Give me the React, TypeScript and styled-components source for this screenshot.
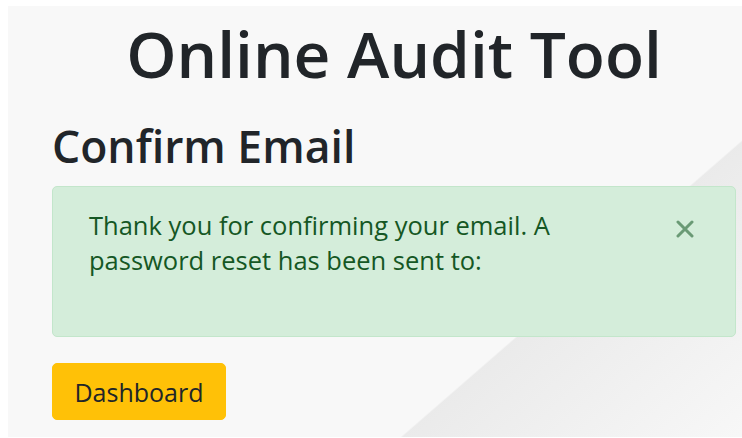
import React from 'react';
import styled, { createGlobalStyle } from 'styled-components';

const GlobalStyle = createGlobalStyle`
  html, body {
    margin: 0;
    padding: 0;
    background: #ffffff;
  }
  body {
    font-family: "Open Sans", "Noto Sans", sans-serif;
    color: #212529;
  }
`;

const Page = styled.div`
  margin: 6px 0 1px 8px;
  height: 431px;
  box-sizing: border-box;
  overflow: hidden;
  background:
    linear-gradient(139deg, rgba(255, 255, 255, 0) 72.2%, rgba(233, 233, 233, 0.9) 72.4%, rgba(246, 246, 246, 0.4) 100%),
    #f8f8f8;
`;

const Title = styled.h1`
  margin: 0;
  padding: 9px 0 0 38px;
  text-align: center;
  font-size: 64px;
  font-weight: 600;
  line-height: 78px;
  color: #212529;
`;

const Content = styled.div`
  padding: 25px 6px 0 44px;
`;

const Heading = styled.h2`
  margin: 0 0 12px 0;
  font-size: 44.5px;
  font-weight: 600;
  line-height: 56px;
  color: #212529;
`;

const Alert = styled.div`
  position: relative;
  box-sizing: border-box;
  height: 151px;
  padding: 21px 110px 0 36px;
  background: #d4edda;
  border: 1px solid #c3e6cb;
  border-radius: 5px;
  color: #155724;
  font-size: 25.5px;
  line-height: 35px;
`;

const CloseButton = styled.button`
  position: absolute;
  top: 33px;
  right: 41px;
  padding: 0;
  border: none;
  background: none;
  color: #155724;
  opacity: 0.55;
  cursor: pointer;
  line-height: 0;
`;

const Actions = styled.div`
  display: flex;
  padding-top: 26px;
`;

const Button = styled.button`
  width: 174px;
  height: 57px;
  border: 1px solid #ffc107;
  border-radius: 5px;
  background: #ffc107;
  color: #212529;
  font-family: inherit;
  font-size: 25px;
  cursor: pointer;
`;

export default function App() {
  return (
    <>
      <GlobalStyle />
      <Page>
        <Title>Online Audit Tool</Title>
        <Content>
          <Heading>Confirm Email</Heading>
          <Alert role="alert">
            Thank you for confirming your email. A password reset has been sent to:
            <CloseButton aria-label="Close">
              <svg width="18" height="18" viewBox="0 0 18 18">
                <path d="M2 2 L16 16 M16 2 L2 16" stroke="currentColor" strokeWidth="3" strokeLinecap="round" />
              </svg>
            </CloseButton>
          </Alert>
          <Actions>
            <Button>Dashboard</Button>
          </Actions>
        </Content>
      </Page>
    </>
  );
}
